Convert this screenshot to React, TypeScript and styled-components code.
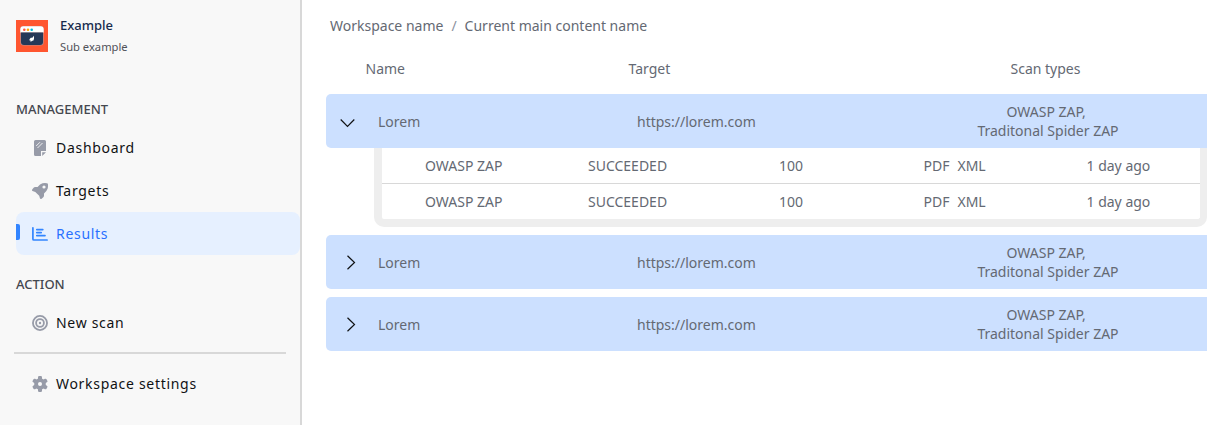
import React from "react";
import styled, { createGlobalStyle } from "styled-components";

const GlobalStyle = createGlobalStyle`
  *, *::before, *::after { box-sizing: border-box; }
  body {
    margin: 0;
    background: #fff;
    font-family: "Noto Sans", sans-serif;
    font-size: 14px;
    color: #646973;
    overflow: hidden;
  }
`;

const Layout = styled.div`
  display: flex;
  height: 100vh;
`;

const Sidebar = styled.aside`
  flex: 0 0 302px;
  background: #f8f8f8;
  border-right: 2px solid #d8d8d8;
`;

const Brand = styled.header`
  display: flex;
  gap: 12px;
  height: 101px;
  padding: 20px 0 0 16px;
`;

const BrandText = styled.div`
  padding-top: 1px;
`;

const BrandName = styled.div`
  margin-top: -4px;
  font-size: 13px;
  line-height: 16px;
  font-weight: 500;
  color: #172b4d;
`;

const BrandSub = styled.div`
  margin-top: 6px;
  font-size: 11.2px;
  line-height: 16px;
  color: #505258;
`;

const SectionTitle = styled.h2`
  margin: 0;
  padding-left: 16px;
  font-size: 13px;
  line-height: 16px;
  font-weight: 500;
  color: #44474f;
`;

const NavList = styled.nav<{ $top: number; $bottom: number }>`
  padding: ${(p) => p.$top}px 0 ${(p) => p.$bottom}px 16px;
`;

const NavItem = styled.a<{ $active?: boolean }>`
  display: flex;
  align-items: center;
  height: 43px;
  border-radius: 8px;
  background: ${(p) => (p.$active ? "#e6f0ff" : "transparent")};
  color: ${(p) => (p.$active ? "#2970ff" : "#101214")};
  letter-spacing: 0.7px;

  &::before {
    content: "";
    width: 4px;
    height: 16px;
    margin: -4px 12px 0 0;
    border-radius: 0 2px 2px 0;
    background: ${(p) => (p.$active ? "#3385ff" : "transparent")};
  }

  svg {
    margin-right: 8px;
    color: ${(p) => (p.$active ? "#3385ff" : "#979ba8")};
  }
`;

const Divider = styled.hr`
  width: 272px;
  height: 2px;
  margin: 0 0 0 14px;
  border: 0;
  background: #d8d8d8;
`;

const Main = styled.main`
  flex: 1;
  min-width: 0;
  padding: 16px 0 0 24px;
`;

const Breadcrumbs = styled.div`
  display: flex;
  gap: 8px;
  padding-left: 4px;
  line-height: 20px;
`;

const Slash = styled.span`
  color: #8b919e;
`;

const TableHead = styled.div`
  display: grid;
  grid-template-columns: 39.5px 263px 317px 200px;
  align-items: center;
  height: 20px;
  margin: 22px 0 16px;
`;

const Row = styled.div`
  display: grid;
  grid-template-columns: 52px 259px 311px 200px;
  align-items: center;
  height: 54px;
  margin-bottom: 8px;
  border-radius: 5px 0 0 5px;
  background: #cce0ff;
  line-height: 19px;
`;

const Cell = styled.span<{ $column?: number; $center?: boolean }>`
  grid-column: ${(p) => p.$column ?? "auto"};
  text-align: ${(p) => (p.$center ? "center" : "left")};
`;

const ChevronBox = styled.span<{ $open?: boolean }>`
  display: flex;
  padding: ${(p) => (p.$open ? "4px 0 0 14px" : "1px 0 0 17px")};
`;

const Details = styled.div`
  margin: -8px 0 8px 48px;
  border: solid #eee;
  border-width: 0 7px 8px 8px;
  border-radius: 0 0 10px 10px;
`;

const DetailRow = styled.div`
  display: grid;
  grid-template-columns: 163px 191px 144.5px 163px 1fr;
  align-items: center;
  height: 35px;
  padding-left: 43px;

  & + & {
    height: 36px;
    border-top: 1px solid #d8d8d8;
  }
`;

const Formats = styled.span`
  display: flex;
  gap: 8px;
`;

const LogoIcon = () => (
  <svg width="32" height="32" viewBox="0 0 32 32">
    <rect width="32" height="32" fill="#ff5630" />
    <rect x="4.300" y="6" width="23.400" height="19.400" rx="3" fill="#b98a86" />
    <path d="M7.300 6.200h17.400a3 3 0 0 1 3 3v3.300H4.300V9.200a3 3 0 0 1 3-3z" fill="#fff" />
    <path d="M5 12.600h22V22a3 3 0 0 1-3 3H8a3 3 0 0 1-3-3z" fill="#253858" />
    <circle cx="8.300" cy="9.700" r="1.300" fill="#ff5644" />
    <circle cx="12" cy="9.700" r="1.300" fill="#ffab00" />
    <circle cx="15.700" cy="9.700" r="1.300" fill="#00b8d9" />
    <path d="M18 15.800v3.200l-.8 1.800h-1l-1.600 1.200v-1.600h-1.100v-1.200l1.300-1.400h1.500z" fill="#fff" />
  </svg>
);

const DashboardIcon = () => (
  <svg width="16" height="16" viewBox="0 0 16 16" fill="currentColor">
    <path d="M3.500 0h9A1.500 1.500 0 0 1 14 1.500V11H9v5H3.500A1.500 1.500 0 0 1 2 14.500v-13A1.500 1.500 0 0 1 3.500 0zM10.200 12.200H14L10.200 16z" />
    <path d="M4.200 6L8 2.200M5.500 8l5-5" stroke="#f8f8f8" strokeWidth="0.900" fill="none" />
  </svg>
);

const RocketIcon = () => (
  <svg width="16" height="16" viewBox="0 0 16 16" fill="currentColor">
    <path
      fillRule="evenodd"
      d="M10.500.3Q12.600-.2 15 .2q.8.100.9.900.3 2.500-.2 4.500-.8 2.500-3.700 5v2.200q0 .9-.7 1.500L9.600 15.700q-.9.700-1.600-.2L7.200 12.800 3.300 8.900.5 8q-.9-.6-.3-1.500L1.600 4.700q.6-.8 1.500-.8h2.500Q8 1 10.500.3zM12 2.400a1.600 1.600 0 1 0 0 3.200 1.600 1.600 0 0 0 0-3.200z"
    />
  </svg>
);

const ChartIcon = () => (
  <svg width="16" height="16" viewBox="0 0 16 16" fill="none" stroke="currentColor" strokeWidth="1.700" strokeLinecap="round" strokeLinejoin="round">
    <path d="M.9 1.800v11.200a1 1 0 0 0 1 1h13.200M4.800 3.600h6M4.800 6.600h4.400M4.800 9.600h8.200" />
  </svg>
);

const TargetIcon = () => (
  <svg width="16" height="16" viewBox="0 0 16 16" fill="none" stroke="currentColor" strokeWidth="1.800">
    <circle cx="8" cy="8" r="7.050" />
    <circle cx="8" cy="8" r="3.900" />
    <circle cx="8" cy="8" r="1.200" fill="currentColor" stroke="none" />
  </svg>
);

const GearIcon = () => (
  <svg width="16" height="16" viewBox="0 0 16 16">
    <g fill="currentColor">
      <circle cx="8" cy="8" r="5.800" />
      {[0, 60, 120].map((angle) => (
        <rect key={angle} x="6" y="0" width="4" height="16" rx="1.200" transform={`rotate(${angle} 8 8)`} />
      ))}
    </g>
    <circle cx="8" cy="8" r="2" fill="#f8f8f8" />
  </svg>
);

const Chevron = ({ open }: { open?: boolean }) => (
  <ChevronBox $open={open}>
    <svg width="16" height="16" viewBox="0 0 16 16" fill="none" stroke="#101214" strokeWidth="1.200">
      <path d={open ? "M.7 4.500L7.500 11.300l6.800-6.800" : "M4.500.7l7 6.800-7 6.800"} />
    </svg>
  </ChevronBox>
);

const ResultRow = ({ open }: { open?: boolean }) => (
  <Row>
    <Chevron open={open} />
    <Cell>Lorem</Cell>
    <Cell>https://lorem.com</Cell>
    <Cell $center>
      OWASP ZAP,&nbsp;
      <br />
      Traditonal Spider ZAP
    </Cell>
  </Row>
);

const ScanDetail = () => (
  <DetailRow>
    <span>OWASP ZAP</span>
    <span>SUCCEEDED</span>
    <span>100</span>
    <Formats>
      <span>PDF</span>
      <span>XML</span>
    </Formats>
    <span>1 day ago</span>
  </DetailRow>
);

export default function App() {
  return (
    <>
      <GlobalStyle />
      <Layout>
        <Sidebar>
          <Brand>
            <LogoIcon />
            <BrandText>
              <BrandName>Example</BrandName>
              <BrandSub>Sub example</BrandSub>
            </BrandText>
          </Brand>
          <SectionTitle>MANAGEMENT</SectionTitle>
          <NavList $top={9} $bottom={21}>
            <NavItem><DashboardIcon />Dashboard</NavItem>
            <NavItem><RocketIcon />Targets</NavItem>
            <NavItem $active><ChartIcon />Results</NavItem>
          </NavList>
          <SectionTitle>ACTION</SectionTitle>
          <NavList $top={9} $bottom={8}>
            <NavItem><TargetIcon />New scan</NavItem>
          </NavList>
          <Divider />
          <NavList $top={8} $bottom={0}>
            <NavItem><GearIcon />Workspace settings</NavItem>
          </NavList>
        </Sidebar>
        <Main>
          <Breadcrumbs>
            <span>Workspace name</span>
            <Slash>/</Slash>
            <span>Current main content name</span>
          </Breadcrumbs>
          <TableHead>
            <Cell $column={2}>Name</Cell>
            <Cell>Target</Cell>
            <Cell $center>Scan types</Cell>
          </TableHead>
          <ResultRow open />
          <Details>
            <ScanDetail />
            <ScanDetail />
          </Details>
          <ResultRow />
          <ResultRow />
        </Main>
      </Layout>
    </>
  );
}
